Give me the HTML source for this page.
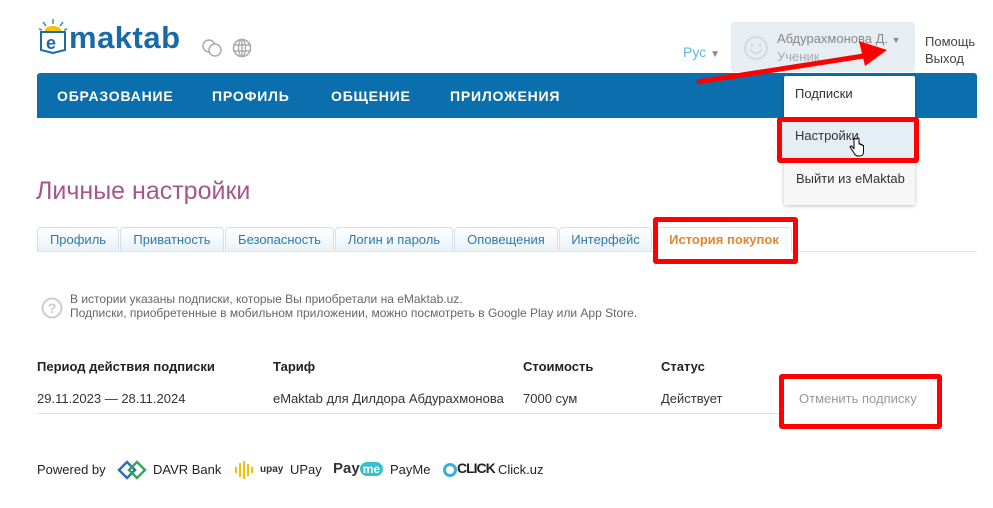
<!DOCTYPE html>
<html><head><meta charset="utf-8"><style>
body{margin:0;width:993px;height:508px;background:#fff;font-family:"Liberation Sans",sans-serif;position:relative;overflow:hidden}
.a{position:absolute;white-space:nowrap}
.nav{left:37px;top:73px;width:940px;height:45px;background:#0b6fae;border-radius:3px 3px 0 0}
.nav span{position:absolute;top:15px;color:#fff;font-weight:bold;font-size:14px;letter-spacing:0.8px}
.tab{position:absolute;top:227px;height:24px;border:1px solid #d4e0e8;border-bottom:none;border-radius:4px 4px 0 0;background:linear-gradient(#fff,#e9f2f8);color:#2a7ab0;font-size:13px;line-height:24px;text-align:center;box-sizing:border-box}
.red{position:absolute;border:5px solid #f00;border-radius:3px;box-sizing:border-box}
.th{font-size:13px;font-weight:bold;color:#222;top:359px}
.td{font-size:13px;color:#333;top:391px}
.f{font-size:13px;color:#222;top:462px}
</style></head><body>
<svg class="a" style="left:38px;top:18px" width="30" height="36" viewBox="0 0 30 36"><path d="M8 8l-3-4M15 6V1M22 8l3-4M4 12l-3-1M26 12l3-1" stroke="#2b8fd0" stroke-width="1.5"/><ellipse cx="15" cy="12" rx="8" ry="4" fill="#f3c400"/><path d="M3 14h24v18l-12 3-12-3z" fill="#fff" stroke="#1b6aa8" stroke-width="2"/><text x="8" y="31" font-size="18" font-weight="bold" fill="#1b6aa8" font-family="Liberation Sans">e</text></svg>
<div class="a" style="left:69px;top:20px;font-size:31px;font-weight:bold;color:#1b6aa8;letter-spacing:0.5px">maktab</div>
<svg class="a" style="left:200px;top:37px" width="24" height="22" viewBox="0 0 24 22"><circle cx="9" cy="9" r="6" fill="none" stroke="#aaa" stroke-width="1.5"/><circle cx="15" cy="13" r="6" fill="#fff" stroke="#aaa" stroke-width="1.5"/></svg>
<svg class="a" style="left:232px;top:38px" width="20" height="20" viewBox="0 0 20 20"><circle cx="10" cy="10" r="8.5" fill="none" stroke="#aaa" stroke-width="1.6"/><ellipse cx="10" cy="10" rx="3.5" ry="8.5" fill="none" stroke="#aaa" stroke-width="1.4"/><path d="M2 7h16M2 13h16M10 2v16" stroke="#aaa" stroke-width="1.4"/></svg>
<div class="a" style="left:683px;top:44px;color:#5bb8e0;font-size:14px">Рус <span style="color:#888;font-size:10px">▼</span></div>
<div class="a" style="left:731px;top:22px;width:184px;height:50px;background:#e6eef4;border-radius:3px"></div>
<svg class="a" style="left:743px;top:35px" width="26" height="26" viewBox="0 0 26 26"><circle cx="13" cy="13" r="11" fill="none" stroke="#d4dbe0" stroke-width="2"/><circle cx="9" cy="10" r="1.5" fill="#d4dbe0"/><circle cx="17" cy="10" r="1.5" fill="#d4dbe0"/><path d="M7 15q6 6 12 0" fill="none" stroke="#d4dbe0" stroke-width="2"/></svg>
<div class="a" style="left:777px;top:31px;font-size:13px;color:#888">Абдурахмонова Д. <span style="font-size:9px">▼</span></div>
<div class="a" style="left:777px;top:49px;font-size:13px;color:#aaa">Ученик</div>
<div class="a" style="left:925px;top:33px;font-size:13px;color:#444;line-height:17px">Помощь<br>Выход</div>
<div class="a nav"><span style="left:20px">ОБРАЗОВАНИЕ</span><span style="left:175px">ПРОФИЛЬ</span><span style="left:294px">ОБЩЕНИЕ</span><span style="left:413px">ПРИЛОЖЕНИЯ</span></div>
<div class="a" style="left:784px;top:76px;width:131px;height:129px;background:#fff;box-shadow:0 1px 4px rgba(0,0,0,.25);border-radius:2px"></div>
<div class="a" style="left:784px;top:160px;width:131px;height:45px;background:#f6f6f6"></div>
<div class="a" style="left:795px;top:86px;font-size:13px;color:#333">Подписки</div>
<div class="a" style="left:782px;top:121px;width:132px;height:37px;background:#e6eef5"></div>
<div class="red" style="left:777px;top:117px;width:142px;height:46px"></div>
<div class="a" style="left:795px;top:128px;font-size:13px;color:#333">Настройки</div>
<svg class="a" style="left:849px;top:137px" width="16" height="20" viewBox="0 0 16 20"><path d="M5 1.5v10l-2-2c-1-1-2.5 0-1.5 1.2L5 16c1 2 2 3 4 3h2c2 0 3.5-1.5 3.5-4V9c0-1-1.5-1-1.5 0V8c0-1-1.5-1-1.5 0V7.5c0-1-1.5-1-1.5 0V2c0-1.3-2-1.3-2 0z" fill="#fff" stroke="#000" stroke-width="1"/></svg>
<div class="a" style="left:796px;top:171px;font-size:13px;color:#333">Выйти из eMaktab</div>
<svg class="a" style="left:690px;top:35px" width="220" height="55" viewBox="0 0 220 55"><line x1="7" y1="47" x2="180" y2="20" stroke="#f00" stroke-width="5"/><path d="M197 15l-28-9 6 25z" fill="#f00"/></svg>
<div class="a" style="left:36px;top:177px;font-size:25px;color:#a4578f">Личные настройки</div>
<div class="a" style="left:37px;top:251px;width:940px;height:1px;background:#dde5ea"></div>
<div class="tab" style="left:37px;width:82px">Профиль</div>
<div class="tab" style="left:120px;width:104px">Приватность</div>
<div class="tab" style="left:225px;width:109px">Безопасность</div>
<div class="tab" style="left:335px;width:118px">Логин и пароль</div>
<div class="tab" style="left:454px;width:104px">Оповещения</div>
<div class="tab" style="left:559px;width:93px">Интерфейс</div>
<div class="tab" style="left:656px;width:136px;background:#fff;color:#e6862a;font-weight:bold;height:25px">История покупок</div>
<div class="red" style="left:653px;top:217px;width:145px;height:47px"></div>
<svg class="a" style="left:41px;top:297px" width="22" height="22" viewBox="0 0 22 22"><circle cx="11" cy="11" r="9.5" fill="#fff" stroke="#ccc" stroke-width="2"/><text x="11" y="16" text-anchor="middle" font-size="14" font-weight="bold" fill="#ccc" font-family="Liberation Sans">?</text></svg>
<div class="a" style="left:70px;top:292px;font-size:12px;color:#666;line-height:14px">В истории указаны подписки, которые Вы приобретали на eMaktab.uz.<br>Подписки, приобретенные в мобильном приложении, можно посмотреть в Google Play или App Store.</div>
<div class="a th" style="left:37px">Период действия подписки</div>
<div class="a th" style="left:273px">Тариф</div>
<div class="a th" style="left:523px">Стоимость</div>
<div class="a th" style="left:661px">Статус</div>
<div class="a td" style="left:37px">29.11.2023 — 28.11.2024</div>
<div class="a td" style="left:273px">eMaktab для Дилдора Абдурахмонова</div>
<div class="a td" style="left:523px">7000 сум</div>
<div class="a td" style="left:661px">Действует</div>
<div class="a" style="left:37px;top:413px;width:742px;height:1px;background:#dde3e7"></div>
<div class="a td" style="left:799px;color:#999">Отменить подписку</div>
<div class="red" style="left:779px;top:374px;width:163px;height:55px"></div>
<div class="a f" style="left:37px">Powered by</div>
<svg class="a" style="left:117px;top:460px" width="30" height="20" viewBox="0 0 30 20"><path d="M2 10l8-8 8 8-8 8z" fill="none" stroke="#2f6fb8" stroke-width="2.5"/><path d="M12 10l8-8 8 8-8 8z" fill="none" stroke="#3aa65a" stroke-width="2.5"/></svg>
<div class="a f" style="left:153px">DAVR Bank</div>
<svg class="a" style="left:234px;top:459px" width="22" height="22"><g stroke="#f2c200" stroke-width="2"><path d="M2 8v6M6 4v14M10 2v18M14 5v12M18 8v6"/></g></svg>
<div class="a" style="left:260px;top:464px;font-size:10px;font-weight:bold;color:#333">upay</div>
<div class="a f" style="left:290px">UPay</div>
<div class="a" style="left:333px;top:460px;font-size:15px;font-weight:bold;color:#333">Pay<span style="background:#35c0d0;color:#fff;border-radius:8px;padding:0 3px;font-size:12px">me</span></div>
<div class="a f" style="left:390px">PayMe</div>
<svg class="a" style="left:442px;top:462px" width="16" height="16"><circle cx="8" cy="8" r="5.5" fill="none" stroke="#3ab0d0" stroke-width="3"/></svg>
<div class="a" style="left:457px;top:460px;font-size:14px;font-weight:bold;color:#222;letter-spacing:-1px">CLICK</div>
<div class="a f" style="left:498px">Click.uz</div>
</body></html>
